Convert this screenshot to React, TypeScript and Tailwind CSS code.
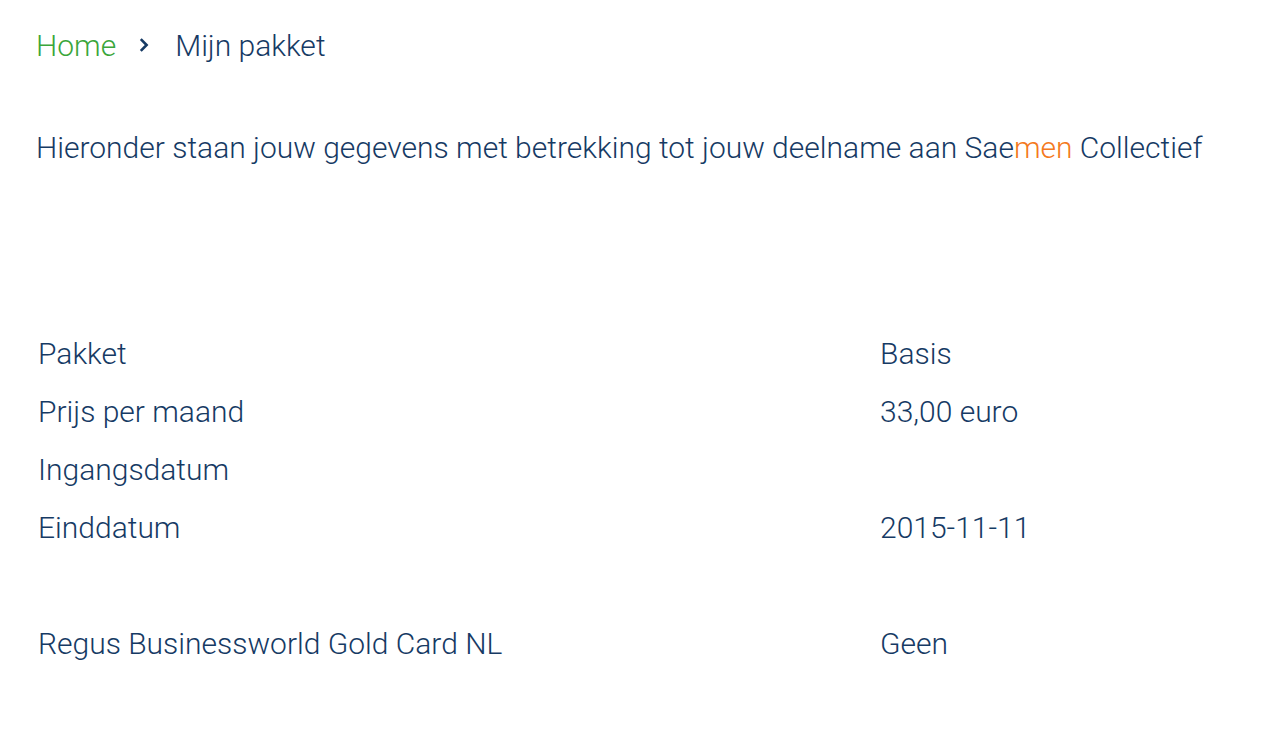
import React from 'react';

const rows: [string, string][] = [
  ['Pakket', 'Basis'],
  ['Prijs per maand', '33,00 euro'],
  ['Ingangsdatum', ''],
  ['Einddatum', '2015-11-11'],
];

export default function App() {
  return (
    <div className="min-h-screen bg-white text-[#163a64] font-light font-['Roboto',sans-serif] px-9 pt-[25px]">
      <nav className="flex items-center h-10 text-[30px]">
        <span className="text-[#3aa63a]">Home</span>
        <svg className="w-[10px] h-[14px] ml-[23px] mr-[26px]" viewBox="0 0 10 14" fill="none">
          <path d="M1.8 1.2 L7.6 7 L1.8 12.8" stroke="#163a64" strokeWidth="2.6" />
        </svg>
        <span>Mijn pakket</span>
      </nav>

      <p className="mt-[63px] text-[30px] leading-[40px]">
        Hieronder staan jouw gegevens met betrekking tot jouw deelname aan Sae
        <span className="text-[#f47920]">men</span> Collectief
      </p>

      <div className="mt-[156px] pl-[2px] text-[30px]">
        {rows.map(([label, value]) => (
          <div key={label} className="grid grid-cols-[842px_1fr] h-[58px] items-center">
            <span>{label}</span>
            <span>{value}</span>
          </div>
        ))}
        <div className="h-[58px]" />
        <div className="grid grid-cols-[842px_1fr] h-[58px] items-center">
          <span>Regus Businessworld Gold Card NL</span>
          <span>Geen</span>
        </div>
      </div>
    </div>
  );
}
